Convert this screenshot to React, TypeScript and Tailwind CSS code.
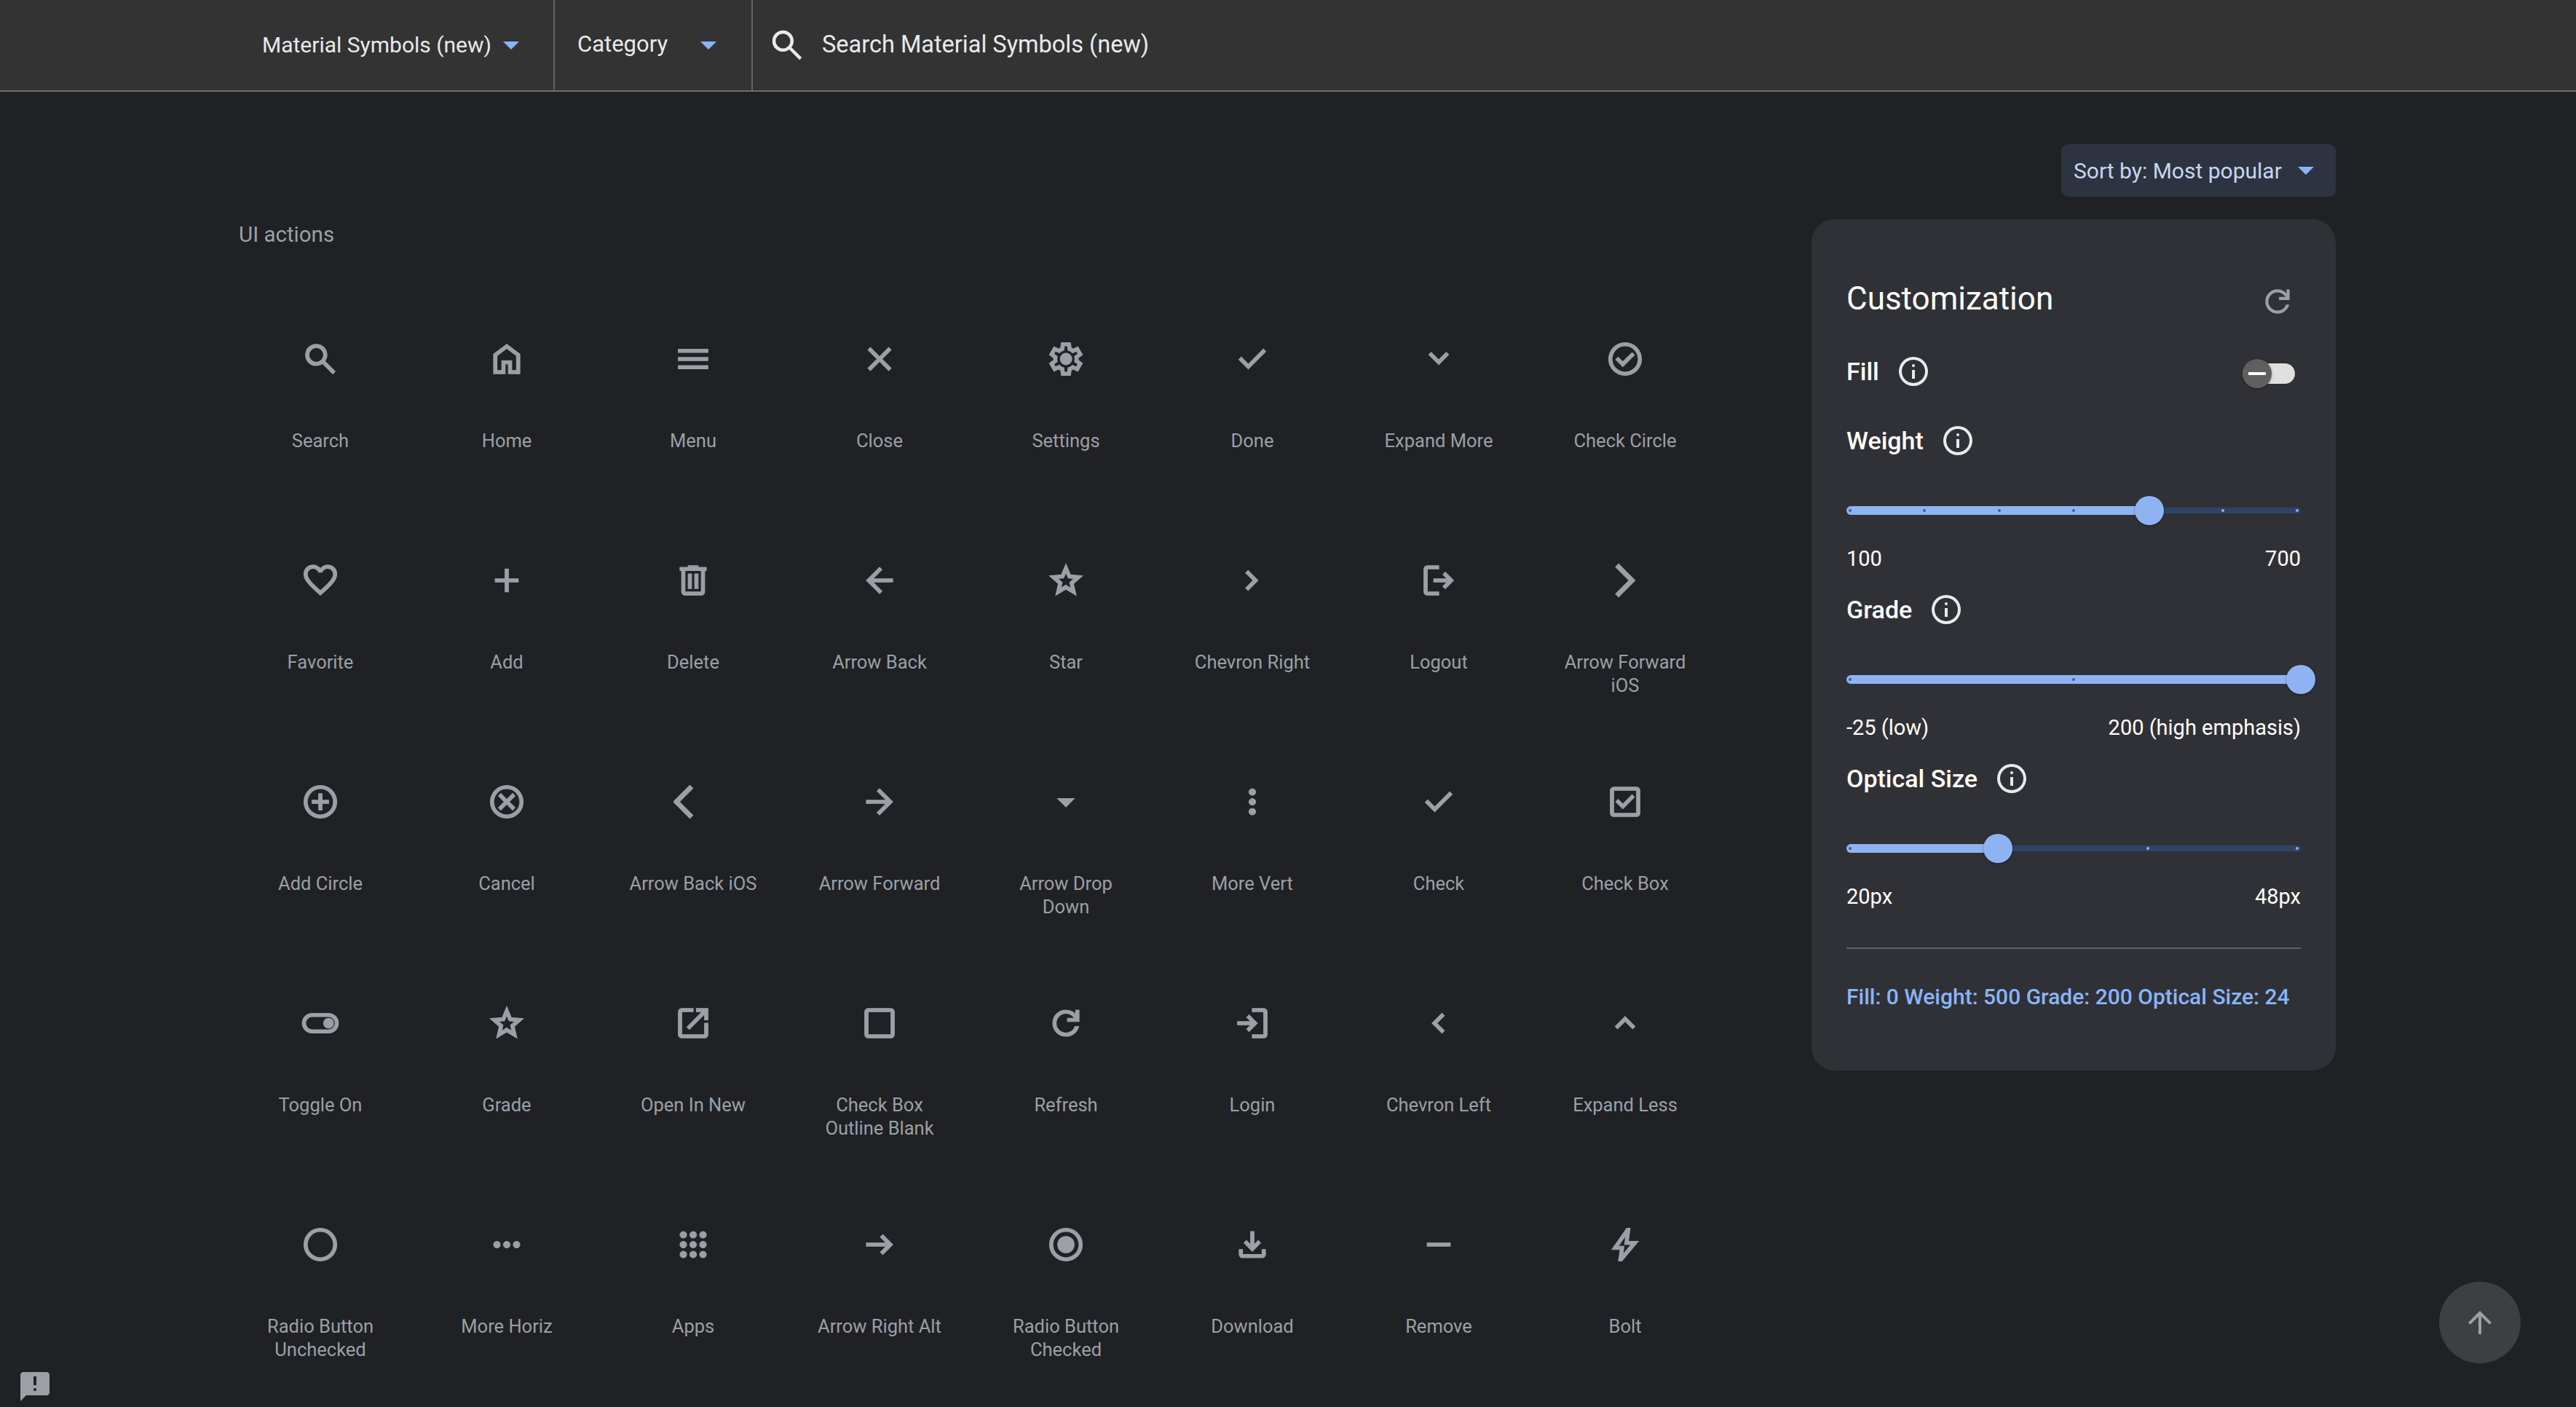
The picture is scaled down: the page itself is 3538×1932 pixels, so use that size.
import React from 'react';

// Material Symbols outlines, 960 grid
const ring = 'M480-80q-83 0-156-31.5T197-197q-54-54-85.5-127T80-480q0-83 31.5-156T197-763q54-54 127-85.5T480-880q83 0 156 31.5T763-763q54 54 85.5 127T880-480q0 83-31.5 156T763-197q-54 54-127 85.5T480-80Zm0-80q134 0 227-93t93-227q0-134-93-227t-227-93q-134 0-227 93t-93 227q0 134 93 227t227 93Z';
const check = 'M382-240 154-468l57-57 171 171 367-367 57 57-424 424Z';
const star = 'm354-287 126-76 126 77-33-144 111-96-146-13-58-136-58 135-146 13 111 97-33 143ZM233-120l65-281L80-590l288-25 112-265 112 265 288 25-218 189 65 281-247-149-247 149Z';
const dot = (x: number, y: number) => `M${x} ${y}m-80 0a80 80 0 1 0 160 0a80 80 0 1 0-160 0Z`;

const paths = {
  search: 'M784-120 532-372q-30 24-69 38t-83 14q-109 0-184.5-75.5T120-580q0-109 75.5-184.5T380-840q109 0 184.5 75.5T640-580q0 44-14 83t-38 69l252 252-56 56ZM380-400q75 0 127.5-52.5T560-580q0-75-52.5-127.5T380-760q-75 0-127.5 52.5T200-580q0 75 52.5 127.5T380-400Z',
  home: 'M240-200h120v-240h240v240h120v-360L480-740 240-560v360Zm-80 80v-480l320-240 320 240v480H520v-240h-80v240H160Z',
  menu: 'M120-240v-80h720v80H120Zm0-200v-80h720v80H120Zm0-200v-80h720v80H120Z',
  close: 'm256-200-56-56 224-224-224-224 56-56 224 224 224-224 56 56-224 224 224 224-56 56-224-224-224 224Z',
  settings: 'm370-80-16-128q-13-5-24.5-12T307-235l-119 50L78-375l103-78q-1-7-1-13.5v-27q0-6.5 1-13.5L78-585l110-190 119 50q11-8 23-15t24-12l16-128h220l16 128q13 5 24.5 12t22.5 15l119-50 110 190-103 78q1 7 1 13.5v27q0 6.5-2 13.5l103 78-110 190-118-50q-11 8-23 15t-24 12L590-80H370Zm70-80h79l14-106q31-8 57.5-23.5T639-327l99 41 39-68-86-65q5-14 7-29.5t2-31.5q0-16-2-31.5t-7-29.5l86-65-39-68-99 42q-22-23-48.5-38.5T533-694l-13-106h-79l-14 106q-31 8-57.5 23.5T321-633l-99-41-39 68 86 64q-5 15-7 30t-2 32q0 16 2 31t7 30l-86 65 39 68 99-42q22 23 48.5 38.5T427-266l13 106Zm42-180q58 0 99-41t41-99q0-58-41-99t-99-41q-59 0-99.5 41T342-480q0 58 40.5 99t99.5 41Z',
  check,
  expandMore: 'M480-345 240-585l56-56 184 184 184-184 56 56-240 240Z',
  checkCircle: 'm424-296 282-282-56-56-226 226-114-114-56 56 170 170Z' + ring,
  favorite: 'm480-120-58-52q-101-91-167-157T150-447.5Q111-500 95.5-544T80-634q0-94 63-157t157-63q52 0 99 22t81 62q34-40 81-62t99-22q94 0 157 63t63 157q0 46-15.5 90T810-447.5Q771-395 705-329T538-172l-58 52Zm0-108q96-86 158-147.5t98-107q36-45.5 50-81t14-70.5q0-60-40-100t-100-40q-47 0-87 26.5T518-680h-76q-15-41-55-67.5T300-774q-60 0-100 40t-40 100q0 35 14 70.5t50 81q36 45.5 98 107T480-228Z',
  add: 'M440-440H200v-80h240v-240h80v240h240v80H520v240h-80v-240Z',
  delete: 'M280-120q-33 0-56.5-23.5T200-200v-520h-40v-80h200v-40h240v40h200v80h-40v520q0 33-23.5 56.5T680-120H280Zm400-600H280v520h400v-520ZM360-280h80v-360h-80v360Zm160 0h80v-360h-80v360Z',
  arrowBack: 'm313-440 224 224-57 56-320-320 320-320 57 56-224 224h487v80H313Z',
  star,
  chevronRight: 'M504-480 320-664l56-56 240 240-240 240-56-56 184-184Z',
  logout: 'M200-120q-33 0-56.5-23.5T120-200v-560q0-33 23.5-56.5T200-840h280v80H200v560h280v80H200Zm440-160-55-58 102-102H360v-80h327L585-622l55-58 200 200-200 200Z',
  forwardIos: 'm321-80-71-71 329-329-329-329 71-71 400 400L321-80Z',
  addCircle: 'M440-280h80v-160h160v-80H520v-160h-80v160H280v80h160v160Z' + ring,
  cancel: 'm336-280 144-144 144 144 56-56-144-144 144-144-56-56-144 144-144-144-56 56 144 144-144 144 56 56Z' + ring,
  backIos: 'M400-80 0-480l400-400 71 71-329 329 329 329-71 71Z',
  arrowForward: 'M647-440H160v-80h487L423-744l57-56 320 320-320 320-57-56 224-224Z',
  dropDown: 'M480-360 280-560h400L480-360Z',
  moreVert: dot(480, -240) + dot(480, -480) + dot(480, -720),
  checkBox: 'm424-312 282-282-56-56-226 226-114-114-56 56 170 170ZM200-120q-33 0-56.5-23.5T120-200v-560q0-33 23.5-56.5T200-840h560q33 0 56.5 23.5T840-760v560q0 33-23.5 56.5T760-120H200Zm0-80h560v-560H200v560Z',
  toggleOn: 'M280-240q-100 0-170-70T40-480q0-100 70-170t170-70h400q100 0 170 70t70 170q0 100-70 170t-170 70H280Zm0-80h400q66 0 113-47t47-113q0-66-47-113t-113-47H280q-66 0-113 47t-47 113q0 66 47 113t113 47Zm400-40q50 0 85-35t35-85q0-50-35-85t-85-35q-50 0-85 35t-35 85q0 50 35 85t85 35Z',
  openInNew: 'M200-120q-33 0-56.5-23.5T120-200v-560q0-33 23.5-56.5T200-840h280v80H200v560h560v-280h80v280q0 33-23.5 56.5T760-120H200Zm188-212-56-56 372-372H560v-80h280v280h-80v-144L388-332Z',
  boxBlank: 'M200-120q-33 0-56.5-23.5T120-200v-560q0-33 23.5-56.5T200-840h560q33 0 56.5 23.5T840-760v560q0 33-23.5 56.5T760-120H200Zm0-80h560v-560H200v560Z',
  refresh: 'M480-160q-134 0-227-93t-93-227q0-134 93-227t227-93q69 0 132 28.5T720-690v-110h80v280H520v-80h168q-32-56-87.5-88T480-720q-100 0-170 70t-70 170q0 100 70 170t170 70q77 0 139-44t87-116h84q-28 106-114 173t-196 67Z',
  login: 'M480-120v-80h280v-560H480v-80h280q33 0 56.5 23.5T840-760v560q0 33-23.5 56.5T760-120H480Zm-80-160-55-58 102-102H120v-80h327L345-622l55-58 200 200-200 200Z',
  chevronLeft: 'M560-240 320-480l240-240 56 56-184 184 184 184-56 56Z',
  expandLess: 'm296-345-56-56 240-240 240 240-56 56-184-184-184 184Z',
  radioOff: ring,
  moreHoriz: dot(240, -480) + dot(480, -480) + dot(720, -480),
  apps: [240, 480, 720].map((y) => dot(240, -y) + dot(480, -y) + dot(720, -y)).join(''),
  arrowRightAlt: 'm560-240-56-58 142-142H160v-80h486L504-662l56-58 240 240-240 240Z',
  radioOn: ring + 'M480-280q83 0 141.5-58.5T680-480q0-83-58.5-141.5T480-680q-83 0-141.5 58.5T280-480q0 83 58.5 141.5T480-280Z',
  download: 'M480-320 280-520l56-58 104 104v-326h80v326l104-104 56 58-200 200ZM240-160q-33 0-56.5-23.5T160-240v-120h80v120h480v-120h80v120q0 33-23.5 56.5T720-160H240Z',
  remove: 'M200-440v-80h560v80H200Z',
  bolt: 'm422-232 207-248H469l29-227-185 267h139l-30 208ZM320-80l40-280H160l360-520h80l-40 320h240L400-80h-80Z',
  info: 'M440-280h80v-240h-80v240Zm40-320q17 0 28.5-11.5T520-640q0-17-11.5-28.5T480-680q-17 0-28.5 11.5T440-640q0 17 11.5 28.5T480-600Z' + ring,
  arrowUp: 'M440-160v-487L216-423l-56-57 320-320 320 320-56 57-224-224v487h-80Z',
  feedback: 'M480-360q17 0 28.5-11.5T520-400q0-17-11.5-28.5T480-440q-17 0-28.5 11.5T440-400q0 17 11.5 28.5T480-360Zm-40-160h80v-240h-80v240ZM80-80v-720q0-33 23.5-56.5T160-880h640q33 0 56.5 23.5T880-800v480q0 33-23.5 56.5T800-240H240L80-80Z',
};

const icons: [string, string][] = [
  ['Search', paths.search], ['Home', paths.home], ['Menu', paths.menu], ['Close', paths.close],
  ['Settings', paths.settings], ['Done', paths.check], ['Expand More', paths.expandMore], ['Check Circle', paths.checkCircle],
  ['Favorite', paths.favorite], ['Add', paths.add], ['Delete', paths.delete], ['Arrow Back', paths.arrowBack],
  ['Star', paths.star], ['Chevron Right', paths.chevronRight], ['Logout', paths.logout], ['Arrow Forward iOS', paths.forwardIos],
  ['Add Circle', paths.addCircle], ['Cancel', paths.cancel], ['Arrow Back iOS', paths.backIos], ['Arrow Forward', paths.arrowForward],
  ['Arrow Drop Down', paths.dropDown], ['More Vert', paths.moreVert], ['Check', paths.check], ['Check Box', paths.checkBox],
  ['Toggle On', paths.toggleOn], ['Grade', paths.star], ['Open In New', paths.openInNew], ['Check Box Outline Blank', paths.boxBlank],
  ['Refresh', paths.refresh], ['Login', paths.login], ['Chevron Left', paths.chevronLeft], ['Expand Less', paths.expandLess],
  ['Radio Button Unchecked', paths.radioOff], ['More Horiz', paths.moreHoriz], ['Apps', paths.apps], ['Arrow Right Alt', paths.arrowRightAlt],
  ['Radio Button Checked', paths.radioOn], ['Download', paths.download], ['Remove', paths.remove], ['Bolt', paths.bolt],
];

function Sym({ d, className, bold }: { d: string; className: string; bold?: boolean }) {
  return (
    <svg viewBox="0 -960 960 960" className={className} fill="currentColor" stroke="currentColor" strokeWidth={bold ? 22 : 0}>
      <path d={d} />
    </svg>
  );
}

function Caret() {
  return <div className="w-0 h-0 border-x-[11px] border-x-transparent border-t-[11px] border-t-[#8ab4f8]" />;
}

function PanelLabel({ text, className }: { text: string; className: string }) {
  return (
    <div className={`flex items-center gap-[23px] h-12 ${className}`}>
      <span className="text-[34px] font-medium text-white">{text}</span>
      <Sym d={paths.info} className="w-12 h-12 text-[#e8eaed]" />
    </div>
  );
}

// value and ticks are fractions of the track width
function Slider({ value, ticks, className }: { value: number; ticks: number[]; className: string }) {
  return (
    <div className={`relative h-10 ${className}`}>
      <div className="absolute left-0 right-0 top-[16px] h-2 rounded-full bg-[#2f4368]" />
      <div className="absolute left-0 top-[14px] h-3 rounded-l-full bg-[#8fb3f2]" style={{ width: `${value * 100}%` }} />
      {ticks.map((t) => (
        <div
          key={t}
          className={`absolute top-[18px] w-1 h-1 rounded-full ${t < value ? 'bg-[#3b5cae]' : 'bg-[#8ab4f8]'}`}
          style={{ left: `${5 + t * 614 - 2}px` }}
        />
      ))}
      <div
        className="absolute top-0 w-10 h-10 -ml-5 rounded-full bg-[#8fb3f2] shadow-[0_1px_3px_rgba(0,0,0,0.4)]"
        style={{ left: `${value * 100}%` }}
      />
    </div>
  );
}

function Range({ left, right, className }: { left: string; right: string; className: string }) {
  return (
    <div className={`flex justify-between h-10 items-center text-[29px] text-white ${className}`}>
      <span>{left}</span>
      <span>{right}</span>
    </div>
  );
}

export default function App() {
  return (
    <div className="relative h-screen overflow-hidden bg-[#202124] font-['Roboto',sans-serif]">
      {/* Top bar */}
      <header className="flex h-[126px] bg-[#333333] border-b-2 border-[#6b6d70] text-[#e8eaed]">
        <div className="flex items-center w-[762px] pl-[360px] border-r-2 border-[#5f6368] text-[30px]">
          <span className="w-[331px] pb-0.5">Material Symbols (new)</span>
          <Caret />
        </div>
        <div className="flex items-center w-[272px] pl-[31px] border-r-2 border-[#5f6368] text-[31px]">
          <span className="w-[169px] pb-0.5">Category</span>
          <Caret />
        </div>
        <div className="flex items-center pl-[22px]">
          <Sym d={paths.search} className="w-[54px] h-[54px] -ml-[2px]" />
          <span className="ml-[21px] pb-0.5 text-[32.5px]">Search Material Symbols (new)</span>
        </div>
      </header>

      <main className="flex pl-[312px]">
        {/* Icon grid */}
        <div className="w-[2048px] pt-[176px]">
          <h2 className="pl-4 h-10 leading-10 text-[29.5px] text-[#9aa0a6]">UI actions</h2>
          <div className="grid grid-cols-8 mt-[124px]">
            {icons.map(([name, d]) => (
              <div key={name} className="flex flex-col items-center h-[304px] text-[#9aa0a6]">
                <Sym d={d} bold className="w-[54px] h-[54px]" />
                <span className="mt-[69px] w-[180px] text-center text-[25.5px] leading-[32px]">{name}</span>
              </div>
            ))}
          </div>
        </div>

        {/* Customization column */}
        <aside className="flex flex-col items-end w-[720px] ml-[128px] pt-[72px]">
          <div className="flex items-center w-[377px] h-[72px] pl-[17px] rounded-[9px] bg-[#2d3340] text-[30px] text-[#c8d6f2]">
            <span className="w-[308px]">Sort by: Most popular</span>
            <Caret />
          </div>
          <section className="w-[720px] mt-[31px] px-12 pt-[79px] pb-[81px] rounded-[32px] bg-[#303136]">
            <div className="flex items-center justify-between h-[60px]">
              <h3 className="text-[44px] text-white">Customization</h3>
              <Sym d={paths.refresh} className="w-[50px] h-[50px] mr-[7px] mt-2 text-[#9aa0a6]" />
            </div>
            <div className="flex items-center justify-between mt-[46px]">
              <PanelLabel text="Fill" className="" />
              <div className="relative w-[72px] h-7 mr-2 mt-1.5 rounded-full bg-[#e0e0e0]">
                <div className="absolute left-0 top-[-6px] flex items-center justify-center w-10 h-10 rounded-full bg-[#5f5f5f] shadow-[0_1px_3px_rgba(0,0,0,0.4)]">
                  <div className="w-6 h-1 bg-white" />
                </div>
              </div>
            </div>
            <PanelLabel text="Weight" className="mt-[47px]" />
            <Slider value={0.667} ticks={[0, 1 / 6, 2 / 6, 3 / 6, 5 / 6, 1]} className="mt-[52px]" />
            <Range left="100" right="700" className="mt-[27px]" />
            <PanelLabel text="Grade" className="mt-[25px]" />
            <Slider value={1} ticks={[0, 0.5]} className="mt-[52px]" />
            <Range left="-25 (low)" right="200 (high emphasis)" className="mt-[27px]" />
            <PanelLabel text="Optical Size" className="mt-[25px]" />
            <Slider value={0.333} ticks={[0, 2 / 3, 1]} className="mt-[52px]" />
            <Range left="20px" right="48px" className="mt-[27px]" />
            <div className="mt-[49px] h-0.5 bg-[#5f6368]" />
            <p className="mt-[46px] h-10 leading-10 text-[30px] font-medium text-[#8ab4f8]">
              Fill: 0 Weight: 500 Grade: 200 Optical Size: 24
            </p>
          </section>
        </aside>
      </main>

      {/* Floating buttons */}
      <Sym d={paths.feedback} className="absolute left-6 bottom-1 w-12 h-12 text-[#9aa0a6]" />
      <div className="absolute right-[76px] bottom-[60px] flex items-center justify-center w-28 h-28 rounded-full bg-[#3c4043]">
        <Sym d={paths.arrowUp} className="w-12 h-12 text-[#9aa0a6]" />
      </div>
    </div>
  );
}
